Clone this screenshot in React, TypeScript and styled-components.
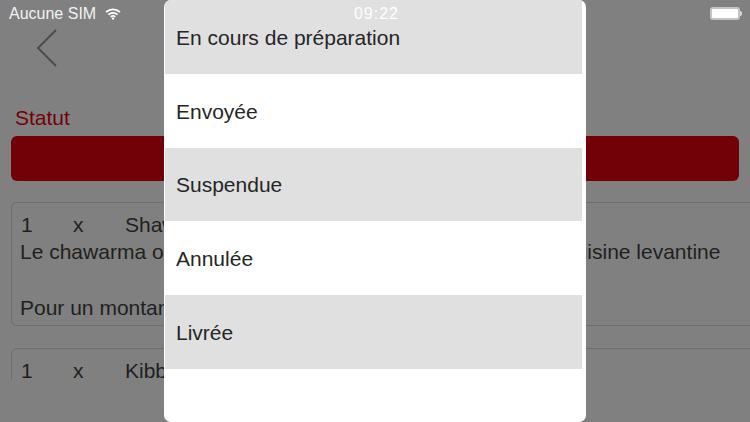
import React from 'react'
import styled, { createGlobalStyle } from 'styled-components'

const GlobalStyle = createGlobalStyle`
  html, body {
    margin: 0;
    padding: 0;
    background: #808080;
  }
  body {
    font-family: 'Liberation Sans', Arial, sans-serif;
  }
`

const Screen = styled.div`
  position: relative;
  width: 750px;
  height: 422px;
  overflow: hidden;
  background: #808080;
  color: #1f1f1f;
`
const StatusBar = styled.div`
  position: relative;
  z-index: 2;
  display: grid;
  grid-template-columns: 1fr auto 1fr;
  align-items: center;
  height: 28px;
  padding: 0 8px 0 9px;
  color: #fff;
  font-size: 16px;
`
const StatusLeft = styled.div`
  display: flex;
  align-items: center;
  gap: 9px;
  color: #f2f2f2;
`
const Clock = styled.div`
  color: #fff;
  margin-left: 2px;
  letter-spacing: 1px;
`
const StatusRight = styled.div`
  display: flex;
  justify-content: flex-end;
  align-items: center;
  margin-top: -1px;
`
const Battery = styled.div`
  width: 26px;
  height: 9px;
  border: 2px solid #c4c4c4;
  border-radius: 3px;
  background: #fff;
`
const BatteryNub = styled.div`
  width: 2px;
  height: 5px;
  border-radius: 0 2px 2px 0;
  background: #d8d8d8;
`
const NavBar = styled.div`
  height: 77px;
  padding: 1px 0 0 36px;
`
const SectionLabel = styled.div`
  padding-left: 15px;
  height: 24px;
  font-size: 21px;
  line-height: 24px;
  color: #720007;
`
const StatusButton = styled.div`
  height: 45px;
  margin: 6px 11px 0;
  border-radius: 6px;
  background: #720007;
`
const OrderList = styled.div`
  display: flex;
  flex-direction: column;
  gap: 22px;
  height: 178px;
  margin-top: 21px;
  padding-left: 11px;
  overflow: hidden;
`
const OrderCard = styled.div`
  flex: none;
  width: 760px;
  height: 104px;
  padding: 9px 9px 9px 8px;
  border: 1px solid #6e6e6e;
  border-radius: 6px;
  font-size: 21px;
  line-height: 28px;
`
const OrderLine = styled.div`
  display: grid;
  grid-template-columns: 52px 52px 1fr;
  height: 26px;
  padding-left: 1px;
  line-height: 26px;
`
const OrderText = styled.div`
  white-space: nowrap;
  min-height: 28px;
`
const Sheet = styled.div`
  position: absolute;
  z-index: 1;
  top: 0;
  left: 164px;
  width: 422px;
  height: 422px;
  padding-left: 1px;
  box-sizing: border-box;
  border-radius: 7px;
  background: #fff;
  overflow: hidden;
`
const Option = styled.div<{ $shaded: boolean }>`
  display: flex;
  align-items: center;
  width: 417px;
  height: 73.8px;
  padding: 2px 0 0 11px;
  box-sizing: border-box;
  background: ${props => (props.$shaded ? '#e0e0e0' : '#fff')};
  color: #262626;
  font-size: 21px;
`

const WifiIcon = () => (
  <svg width='16' height='12' viewBox='0 0 16 12' fill='none' stroke='#fff' strokeWidth='1.7'>
    <path d='M1 4.2C5 .4 11 .4 15 4.2' />
    <path d='M3.4 6.6C6 4.2 10 4.2 12.6 6.6' />
    <path d='M5.7 8.8C7 7.7 9 7.7 10.3 8.8' />
    <circle cx='8' cy='10.6' r='1.2' fill='#fff' stroke='none' />
  </svg>
)

const BackIcon = () => (
  <svg width='22' height='38' viewBox='0 0 22 38' fill='none' stroke='#4a4a4a' strokeWidth='1.8'>
    <path d='M20 1L2 19l18 18' />
  </svg>
)

const options = ['En cours de préparation', 'Envoyée', 'Suspendue', 'Annulée', 'Livrée']

const App = () => {
  return (
    <Screen>
      <GlobalStyle />
      <StatusBar>
        <StatusLeft>
          Aucune SIM
          <WifiIcon />
        </StatusLeft>
        <Clock>09:22</Clock>
        <StatusRight>
          <Battery />
          <BatteryNub />
        </StatusRight>
      </StatusBar>
      <NavBar>
        <BackIcon />
      </NavBar>
      <SectionLabel>Statut</SectionLabel>
      <StatusButton />
      <OrderList>
        <OrderCard>
          <OrderLine>
            <span>1</span>
            <span>x</span>
            <span>Shawarma</span>
          </OrderLine>
          <OrderText>Le chawarma ou shawarma est un repas traditionnel de la cuisine levantine</OrderText>
          <OrderText />
          <OrderText>Pour un montant de 6,50 €</OrderText>
        </OrderCard>
        <OrderCard>
          <OrderLine>
            <span>1</span>
            <span>x</span>
            <span>Kibbeh</span>
          </OrderLine>
        </OrderCard>
      </OrderList>
      <Sheet>
        {options.map((label, index) => (
          <Option key={label} $shaded={index % 2 === 0}>
            {label}
          </Option>
        ))}
      </Sheet>
    </Screen>
  )
}

export default App
